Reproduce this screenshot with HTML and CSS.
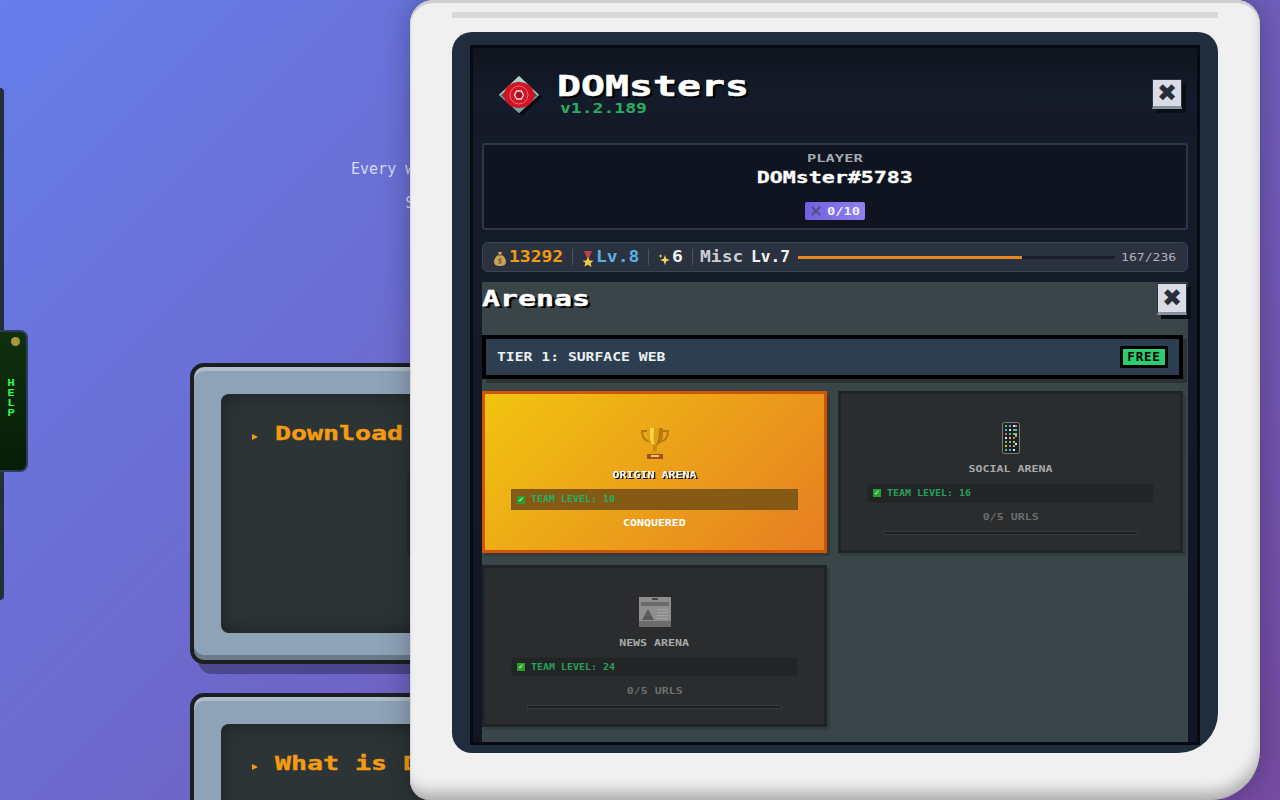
FILE: index.html
```html
<!DOCTYPE html>
<html lang="en">
<head>
    <meta charset="UTF-8">
    <title>DOMsters</title>
    <link rel="stylesheet" href="styles.css">
</head>
<body>
    <div class="side-panel"></div>
    <div class="help-tab">
        <span class="help-led"></span>
        <span class="help-text">HELP</span>
    </div>

    <main class="page">
        <p class="intro">Every website you visit hides a monster within all of its markup<br>Scan pages, catch them all and build your best team.</p>

        <section class="crt">
            <div class="crt-screen">
                <h2 class="crt-title"><span class="crt-arrow"></span><span class="crt-title-text">Download DOMsters</span></h2>
                <div class="crt-box"></div>
            </div>
        </section>

        <section class="crt">
            <div class="crt-screen">
                <h2 class="crt-title"><span class="crt-arrow"></span><span class="crt-title-text">What is DOMsters?</span></h2>
            </div>
        </section>
    </main>

    <div class="device">
        <div class="device-slot"></div>
        <div class="device-screen">
            <div class="popup">
                <header class="popup-head">
                    <svg class="logo" viewBox="0 0 44 40">
                        <path d="M24 3 44 21 24 40 4 21z" fill="#05070c" opacity=".8"/>
                        <path d="M21 0 41 19 21 37 1 19z" fill="#9a9c9c"/>
                        <path d="M21 0 41 19 36 19 21 5 6 19 1 19z" fill="#a9d3ca"/>
                        <path d="M1 19 21 37 41 19 36 19 21 32 6 19z" fill="#74a39c"/>
                        <path d="M3 19Q21 0 39 19 21 38 3 19z" fill="#7a3a3e"/>
                        <ellipse cx="21" cy="19" rx="15" ry="13" fill="#d01426"/>
                        <circle cx="21" cy="19" r="9" fill="none" stroke="#ef6a72" stroke-width="1"/>
                        <path d="M16.500 19l2.200-4h4.600l2.200 4-2.200 4h-4.600z" fill="#a50f1e" stroke="#ffd5d5" stroke-width="1.4"/>
                    </svg>
                    <div class="brand">
                        <h1 class="brand-name">DOMsters</h1>
                        <div class="brand-version">v1.2.189</div>
                    </div>
                    <button class="close-btn">&#10006;</button>
                </header>

                <section class="player">
                    <div class="player-label">PLAYER</div>
                    <div class="player-name">DOMster#5783</div>
                    <div class="player-badge">
                        <svg class="badge-icon" viewBox="0 0 12 12">
                            <path d="M1 1l10 10M11 1 1 11" stroke="#4b4f75" stroke-width="2"/>
                        </svg>
                        <span class="badge-text">0/10</span>
                    </div>
                </section>

                <section class="stats">
                    <svg class="stat-icon" viewBox="0 0 12 16">
                        <path d="M4 1h4L7 4h1q4 3 4 7 0 4-6 4t-6-4q0-4 4-7h1z" fill="#c9a35a"/>
                        <path d="M4 4h4" stroke="#7b5a22" stroke-width="1.2"/>
                        <path d="M8 8H5v2h2v2H4" stroke="#6d4c17" stroke-width="1" fill="none"/>
                    </svg>
                    <span class="stat-gold">13292</span>
                    <span class="stat-sep"></span>
                    <svg class="stat-icon" viewBox="0 0 12 16">
                        <path d="M2 0h8L7 7H5z" fill="#c0404a"/>
                        <path d="M6 6l1.7 3.4 3.8.4-2.8 2.5.8 3.7L6 13.7 2.500 15.500l.8-3.700L.5 9.800l3.800-.4z" fill="#f2c744"/>
                    </svg>
                    <span class="stat-level">Lv.8</span>
                    <span class="stat-sep"></span>
                    <svg class="stat-icon" viewBox="0 0 12 16">
                        <path d="M7 4l1.300 3.700L12 9 8.300 10.300 7 14 5.700 10.300 2 9l3.700-1.300zM2.500 3l.6 1.400 1.400.6-1.400.6-.6 1.400-.6-1.400L.5 5l1.400-.6z" fill="#f4d35e"/>
                    </svg>
                    <span class="stat-points">6</span>
                    <span class="stat-sep"></span>
                    <span class="stat-skill">Misc</span>
                    <span class="stat-skill-level">Lv.7</span>
                    <div class="xp-bar"><div class="xp-fill" style="width: 70.7%"></div></div>
                    <span class="xp-text">167/236</span>
                </section>

                <section class="arenas">
                    <div class="arenas-head">
                        <h2 class="arenas-title">Arenas</h2>
                        <button class="close-btn">&#10006;</button>
                    </div>

                    <div class="tier">
                        <span class="tier-name">TIER 1: SURFACE WEB</span>
                        <span class="tier-tag">FREE</span>
                    </div>

                    <div class="arena-grid">
                        <article class="arena-card arena-done">
                            <svg class="arena-icon" viewBox="0 0 30 34">
                                <path d="M8 4H2q0 9 8 11M22 4h6q0 9-8 11" fill="none" stroke="#b07a14" stroke-width="2"/>
                                <path d="M7 1h16q1 13-5 17H12Q6 14 7 1z" fill="#e0a010"/>
                                <path d="M10 1h4q-1 11 0 16h-2Q9 12 10 1z" fill="#fbd64a"/>
                                <path d="M19 1h4q1 13-5 17h-2q3-6 3-17z" fill="#b87a0c"/>
                                <path d="M13 18h4v6h-4z" fill="#c98a10"/>
                                <path d="M10 24h10l1 3H9z" fill="#e0a010"/>
                                <path d="M7 27h16v5H7z" fill="#a8501a"/>
                                <path d="M11 28h8v2h-8z" fill="#f0c868"/>
                            </svg>
                            <h3 class="arena-name">ORIGIN ARENA</h3>
                            <div class="team-level">
                                <span class="team-check">&#10003;</span><span class="team-text">TEAM LEVEL: 10</span>
                            </div>
                            <div class="arena-conquered">CONQUERED</div>
                        </article>

                        <article class="arena-card">
                            <svg class="arena-icon" viewBox="0 0 30 34">
                                <rect x="6.500" y="1.500" width="17" height="31" rx="2" fill="#1a2224" stroke="#77807f"/>
                                <path d="M9 4h2v2H9zM17 8h2v2h-2zM13 12h2v2h-2zM21 16h-2v-2h2zM9 20h2v2H9zM17 24h2v2h-2zM9 28h2v2H9z" fill="#6dbb7a"/>
                                <path d="M13 4h2v2h-2zM9 8h2v2H9zM21 8h-2v2h2zM17 12h2v2h-2zM13 20h2v2h-2zM13 28h2v2h-2z" fill="#6fa8dc"/>
                                <path d="M17 4h2v2h-2zM13 8h2v2h-2zM9 16h2v2H9zM21 24h-2v-2h2zM17 28h2v2h-2z" fill="#e6e6e6"/>
                                <path d="M9 12h2v2H9zM17 16h2v2h-2zM21 4h-2v2h2zM13 24h2v2h-2z" fill="#d86a7a"/>
                                <path d="M13 16h2v2h-2zM21 12h-2v2h2zM17 20h2v2h-2zM9 24h2v2H9z" fill="#e0b23c"/>
                            </svg>
                            <h3 class="arena-name">SOCIAL ARENA</h3>
                            <div class="team-level">
                                <span class="team-check">&#10003;</span><span class="team-text">TEAM LEVEL: 16</span>
                            </div>
                            <div class="arena-urls">0/5 URLS</div>
                            <div class="arena-progress"></div>
                        </article>

                        <article class="arena-card">
                            <svg class="arena-icon" viewBox="0 0 32 30">
                                <rect width="32" height="30" fill="#8e8e8e"/>
                                <rect y="24" width="32" height="6" fill="#6c6c6c"/>
                                <path d="M2 5h28v4H2z" fill="#6a6a6a"/>
                                <path d="M13 1h6v2h-6z" fill="#4a4a4a"/>
                                <path d="M9 12l6 11H3z" fill="#5a5a5a"/>
                                <path d="M18 12h11v1h-11zM18 15h11v1h-11zM18 18h11v1h-11zM18 21h11v1h-11z" fill="#a2a2a2"/>
                            </svg>
                            <h3 class="arena-name">NEWS ARENA</h3>
                            <div class="team-level">
                                <span class="team-check">&#10003;</span><span class="team-text">TEAM LEVEL: 24</span>
                            </div>
                            <div class="arena-urls">0/5 URLS</div>
                            <div class="arena-progress"></div>
                        </article>
                    </div>
                </section>
            </div>
        </div>
    </div>
</body>
</html>
```

FILE: styles.css
```css
* {
    box-sizing: border-box;
}
html {
    height: 800px;
    overflow: hidden;
}
body {
    margin: 0;
    height: 800px;
    overflow: hidden;
    position: relative;
    background: linear-gradient(135deg, #667eea 0%, #764ba2 100%);
    font-family: "DejaVu Sans Mono", monospace;
}
h1, h2, h3, p {
    margin: 0;
}

/* background page */
.page {
    height: 800px;
    overflow: hidden;
    padding: 152px 190px 0;
}
.intro {
    font-size: 15px;
    line-height: 34px;
    text-align: center;
    color: #d5dcf5;
    height: 211px;
}
.crt {
    height: 301px;
    margin-bottom: 29px;
    padding: 27px;
    background: #8fa3b8;
    border: 4px solid #1b1f22;
    border-radius: 14px;
    box-shadow: 8px 10px 0 rgba(0, 0, 0, 0.3), inset 0 4px 0 #aebdcb, inset 0 -5px 0 #6c7a89;
}
.crt-screen {
    height: 100%;
    padding: 29px 31px;
    background: #2c3436;
    border-radius: 8px;
    box-shadow: inset 0 0 18px rgba(0, 0, 0, 0.4);
}
.crt-title {
    display: flex;
    align-items: center;
    white-space: nowrap;
    font-size: 20px;
    line-height: 20px;
    font-weight: bold;
    color: #f39c12;
}
.crt-title-text {
    transform: scaleX(1.33);
    transform-origin: left;
    -webkit-text-stroke: 0.4px #f39c12;
}
.crt-arrow {
    width: 0;
    height: 0;
    margin: 8px 17px 0 0;
    border-left: 6px solid #f39c12;
    border-top: 3.500px solid transparent;
    border-bottom: 3.500px solid transparent;
}
.crt-box {
    width: 400px;
    height: 85px;
    margin: 29px 0 0 155px;
    background: #242a2c;
    border-radius: 6px;
}
.side-panel {
    position: absolute;
    left: 0;
    top: 88px;
    width: 4px;
    height: 512px;
    background: #22303c;
    border-radius: 0 4px 4px 0;
}
.help-tab {
    position: absolute;
    left: 0;
    top: 330px;
    width: 28px;
    height: 142px;
    background: linear-gradient(180deg, #10300e, #071d07);
    border: 2px solid #2c3e5a;
    border-left: none;
    border-radius: 0 8px 8px 0;
}
.help-led {
    position: absolute;
    left: 11px;
    top: 5px;
    width: 9px;
    height: 9px;
    border-radius: 50%;
    background: #a8993a;
}
.help-text {
    position: absolute;
    left: 6px;
    top: 46px;
    writing-mode: vertical-rl;
    text-orientation: upright;
    font-size: 9px;
    font-weight: bold;
    color: #35f052;
    transform: scaleX(1.4);
}

/* device */
.device {
    position: absolute;
    left: 410px;
    top: 0;
    width: 850px;
    height: 800px;
    padding: 12px 42px 0;
    background: #f0f0f0;
    border-radius: 24px 24px 50px 20px;
    box-shadow: 0 0 30px rgba(0, 0, 0, 0.3), inset 0 3px 0 #cfcfcf, inset -3px -14px 14px -6px rgba(0, 0, 0, 0.28), inset 1px 0 0 #dcdcdc;
}
.device-slot {
    height: 6px;
    background: #d8d8d8;
}
.device-screen {
    height: 721px;
    margin-top: 14px;
    padding: 13px 18px 8px;
    background: #1f2d3d;
    border-radius: 20px 20px 40px 20px;
}
.popup {
    height: 100%;
    padding: 0 9px;
    border: 3px solid #070a10;
    background: linear-gradient(180deg, #151d2c, #101623);
    overflow: hidden;
}
.popup-head {
    display: flex;
    align-items: flex-start;
    height: 87px;
    padding-top: 28px;
    margin: 0 -9px;
    padding-left: 25px;
    padding-right: 15px;
    background: linear-gradient(180deg, #10151f, #141b2a 60%, #121826);
}
.logo {
    width: 44px;
    height: 40px;
    flex: none;
}
.brand {
    margin-left: 15px;
    flex: 1;
    margin-top: -3px;
}
.brand-name {
    font-size: 29px;
    line-height: 27px;
    font-weight: bold;
    color: #fff;
    text-shadow: 2px 2px 0 #000;
    transform: scaleX(1.375);
    transform-origin: left;
    -webkit-text-stroke: 0.5px #fff;
}
.brand-version {
    margin: 0 0 0 3px;
    font-size: 14px;
    line-height: 16px;
    font-weight: bold;
    color: #27ae60;
    transform: scaleX(1.29);
    transform-origin: left;
}
.close-btn {
    display: flex;
    align-items: center;
    justify-content: center;
    flex: none;
    width: 30px;
    height: 30px;
    padding: 0;
    font-family: "DejaVu Sans", sans-serif;
    font-size: 24px;
    line-height: 24px;
    color: #272d3a;
    background: #d9dce4;
    border: 1px solid #2b3342;
    border-bottom: 3px solid #8a8f9c;
    box-shadow: 4px 4px 0 #0a0e15;
}
.popup-head .close-btn {
    margin-top: 3px;
}

.player {
    display: flex;
    flex-direction: column;
    align-items: center;
    height: 87px;
    margin-top: 8px;
    background: #0f1420;
    border: 2px solid #2d3745;
    border-radius: 3px;
}
.player-label {
    margin-top: 8px;
    font-size: 11px;
    line-height: 12px;
    font-weight: bold;
    color: #a3a9b1;
    transform: scaleX(1.4);
}
.player-name {
    margin-top: 4px;
    font-size: 16px;
    line-height: 18px;
    font-weight: bold;
    color: #fff;
    transform: scaleX(1.35);
    -webkit-text-stroke: 0.3px #fff;
}
.player-badge {
    display: flex;
    align-items: center;
    gap: 6px;
    width: 60px;
    height: 18px;
    margin-top: 15px;
    padding: 0 6px;
    background: linear-gradient(90deg, #7360e0, #8f7ff0);
    border-radius: 2px;
}
.badge-icon {
    width: 10px;
    height: 10px;
    flex: none;
}
.badge-text {
    font-size: 10px;
    font-weight: bold;
    color: #f2f0ff;
    transform: scaleX(1.37);
    transform-origin: left;
}

.stats {
    display: flex;
    align-items: center;
    height: 30px;
    margin-top: 12px;
    padding: 0 11px;
    font-size: 15px;
    font-weight: bold;
    white-space: nowrap;
    background: #2a3240;
    border: 1px solid #3b4554;
    border-radius: 6px;
}
.stat-icon {
    width: 12px;
    height: 16px;
    margin-top: 3px;
    flex: none;
}
.stat-gold, .stat-level, .stat-points, .stat-skill, .stat-skill-level {
    flex: none;
    transform: scaleX(1.2);
    transform-origin: left;
}
.stat-gold {
    width: 54px;
    margin-left: 3px;
    color: #f39c12;
}
.stat-level {
    width: 43px;
    margin-left: 2px;
    color: #5dade2;
}
.stat-points {
    width: 11px;
    margin-left: 2px;
    color: #f2f2f2;
}
.stat-sep {
    width: 1px;
    height: 16px;
    margin: 0 9px;
    background: #4a5362;
}
.stat-skill {
    width: 44px;
    margin-left: -2px;
    color: #c9ced4;
}
.stat-skill-level {
    width: 39px;
    margin-left: 7px;
    color: #f2f2f2;
    transform: scaleX(1.08);
}
.xp-bar {
    flex: 1;
    height: 3px;
    margin: 0 6px 0 8px;
    background: #1a202b;
}
.xp-fill {
    height: 100%;
    background: #e08a22;
}
.xp-text {
    flex: none;
    width: 55px;
    font-size: 11px;
    font-weight: normal;
    color: #acb2b8;
    transform: scaleX(1.19);
    transform-origin: left;
}

.arenas {
    height: 460px;
    margin-top: 10px;
    padding-right: 5px;
    background: #3a4547;
}
.arenas-head {
    display: flex;
    justify-content: space-between;
    height: 53px;
}
.arenas-title {
    margin-top: 5px;
    font-size: 22px;
    line-height: 24px;
    font-weight: bold;
    color: #fff;
    text-shadow: 2px 2px 0 #000;
    transform: scaleX(1.36);
    transform-origin: left;
    -webkit-text-stroke: 0.4px #fff;
}
.arenas-head .close-btn {
    margin: 1px -4px 0 0;
    height: 32px;
}
.tier {
    display: flex;
    align-items: center;
    justify-content: space-between;
    height: 44px;
    padding: 0 11px;
    background: #2c3e50;
    border: 4px solid #000;
    box-shadow: 4px 4px 0 rgba(0, 0, 0, 0.25);
}
.tier-name {
    font-size: 11.500px;
    font-weight: bold;
    color: #ecf0f1;
    transform: scaleX(1.28);
    transform-origin: left;
}
.tier-tag {
    width: 48px;
    height: 22px;
    font-size: 12.500px;
    line-height: 16px;
    font-weight: bold;
    letter-spacing: 0.800px;
    text-align: center;
    color: #000;
    background: #2ecc71;
    border: 3px solid #000;
}
.arena-grid {
    display: grid;
    grid-template-columns: 345px 345px;
    column-gap: 11px;
    row-gap: 12px;
    margin-top: 12px;
}
.arena-card {
    display: flex;
    flex-direction: column;
    align-items: center;
    height: 162px;
    padding: 27px 26px 0;
    background: #2a2c2d;
    border: 3px solid #1f2526;
    box-shadow: 3px 3px 0 rgba(0, 0, 0, 0.12);
}
.arena-done {
    padding-top: 33px;
    background: linear-gradient(135deg, #f1c40f, #e67e22);
    border-color: #d35400;
}
.arena-icon {
    width: 32px;
    height: 34px;
    flex: none;
}
.arena-name {
    margin-top: 8px;
    font-size: 9px;
    line-height: 12px;
    font-weight: bold;
    color: #a9a9a9;
    transform: scaleX(1.29);
}
.arena-done .arena-name {
    color: #fff;
    text-shadow: 1px 1px 0 #000;
}
.team-level {
    display: flex;
    align-items: center;
    align-self: stretch;
    height: 20px;
    margin-top: 8px;
    padding-left: 5px;
    color: #2a9d5c;
    background: #222526;
    border: 1px solid #26292a;
}
.arena-done .team-level {
    height: 21px;
    background: #845a14;
    border-color: #7d5a1c;
    color: #27ae60;
}
.team-check {
    width: 8px;
    height: 8px;
    margin-right: 6px;
    font-family: "DejaVu Sans", sans-serif;
    font-size: 7px;
    line-height: 8px;
    text-align: center;
    color: #e6ffe6;
    background: #27a02c;
}
.team-text {
    font-size: 8px;
    font-weight: bold;
    transform: scaleX(1.245);
    transform-origin: left;
}
.arena-conquered {
    margin-top: 7px;
    font-size: 9px;
    line-height: 12px;
    font-weight: bold;
    color: #fff;
    transform: scaleX(1.29);
}
.arena-urls {
    margin-top: 7px;
    font-size: 9px;
    line-height: 14px;
    font-weight: bold;
    color: #6b6e6f;
    transform: scaleX(1.29);
}
.arena-progress {
    align-self: stretch;
    height: 4px;
    margin: 7px 16px 0;
    background: #1c2122;
    border: 1px solid #363a3b;
}
```
